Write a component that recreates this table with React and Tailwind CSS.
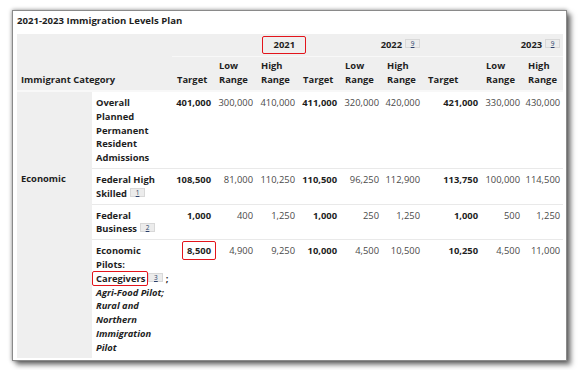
import React from 'react';

const years = [
  { year: '2021', note: null, boxed: true },
  { year: '2022', note: '9' },
  { year: '2023', note: '9' },
];

const rows = [
  {
    label: 'Overall Planned Permanent Resident Admissions',
    vals: ['401,000', '300,000', '410,000', '411,000', '320,000', '420,000', '421,000', '330,000', '430,000'],
  },
  {
    label: 'Federal High Skilled',
    note: '1',
    vals: ['108,500', '81,000', '110,250', '110,500', '96,250', '112,900', '113,750', '100,000', '114,500'],
  },
  {
    label: 'Federal Business',
    note: '2',
    vals: ['1,000', '400', '1,250', '1,000', '250', '1,250', '1,000', '500', '1,250'],
  },
  {
    pilots: true,
    vals: ['8,500', '4,900', '9,250', '10,000', '4,500', '10,500', '10,250', '4,500', '11,000'],
  },
];

const Note = ({ n }) => (
  <span className="inline-block align-top ml-[3px] mt-[1px] w-[15px] h-[9px] bg-[#ececec] border border-[#d8d8d8] text-center text-[6.5px] leading-[8px] font-normal text-[#2a3f6b] underline">
    {n}
  </span>
);

const RedBox = ({ className }) => (
  <span className={`absolute border-[1.5px] border-[#e3141b] rounded-[2px] pointer-events-none ${className}`} />
);

export default function App() {
  return (
    <div className="w-[580px] h-[370px] bg-white pl-[12px] pt-[10px] font-['Open_Sans',sans-serif] text-[9.4px] leading-[13.8px] text-[#1e1e1e]">
      <div className="w-[555px] h-[351px] bg-white border border-[#8a8a8a] shadow-[0_0_4px_rgba(0,0,0,0.45),4px_4px_5px_rgba(0,0,0,0.5)] pl-[4px] pt-[3px]">
        <div className="font-bold text-[9.6px] leading-[14px] mb-[6px]">2021-2023 Immigration Levels Plan</div>

        <table className="table-fixed border-collapse w-[546px]">
          <colgroup>
            <col className="w-[75px]" />
            <col className="w-[80px]" />
            <col className="w-[42px]" />
            <col className="w-[42px]" />
            <col className="w-[42px]" />
            <col className="w-[42px]" />
            <col className="w-[42px]" />
            <col className="w-[41px]" />
            <col className="w-[58px]" />
            <col className="w-[42px]" />
            <col className="w-[40px]" />
          </colgroup>
          <thead className="bg-[#efefef]">
            <tr className="h-[22px]">
              <th colSpan={2} rowSpan={2} className="align-bottom text-left font-bold pl-[4px] pb-[3px] border-b-2 border-[#f8f8f8]">
                Immigrant Category
              </th>
              {years.map((y) => (
                <th key={y.year} colSpan={3} className="text-right font-bold pr-[3px] border-b border-[#f8f8f8] align-middle">
                  <span className="relative">
                    {y.year}
                    {y.boxed && <RedBox className="-left-[12px] -right-[11px] -top-[2px] -bottom-[3px]" />}
                  </span>
                  {y.note && <Note n={y.note} />}
                </th>
              ))}
            </tr>
            <tr className="h-[35px]">
              {years.map((y) => (
                <React.Fragment key={y.year}>
                  <th className="align-bottom text-left font-bold pl-[5px] pb-[3px] border-b-2 border-[#f8f8f8]">Target</th>
                  <th className="align-bottom text-left font-bold pl-[5px] pb-[3px] border-b-2 border-[#f8f8f8]">Low Range</th>
                  <th className="align-bottom text-left font-bold pl-[5px] pb-[3px] border-b-2 border-[#f8f8f8]">High Range</th>
                </React.Fragment>
              ))}
            </tr>
          </thead>
          <tbody>
            {rows.map((r, i) => (
              <tr key={i}>
                {i === 0 && <td className="bg-[#efefef]" />}
                {i === 1 && (
                  <td rowSpan={3} className="bg-[#efefef] align-top font-bold pl-[4px] pt-[4px]">
                    Economic
                  </td>
                )}
                <td className={`align-top font-bold pl-[4px] pr-[3px] pt-[4px] pb-[3px] ${i > 0 ? 'border-t border-[#e9e9e9]' : ''}`}>
                  {r.pilots ? (
                    <>
                      Economic Pilots:{' '}
                      <span className="relative">
                        Caregivers
                        <RedBox className="-left-[4px] -right-[3px] -top-[1px] -bottom-[1px]" />
                      </span>
                      <Note n="3" /> ;{' '}
                      <i>Agri-Food Pilot; Rural and Northern Immigration Pilot</i>
                    </>
                  ) : (
                    <>
                      {r.label}
                      {r.note && <Note n={r.note} />}
                    </>
                  )}
                </td>
                {r.vals.map((v, j) => {
                  const bold = j % 3 === 0;
                  return (
                    <td
                      key={j}
                      className={`align-top text-right pr-[3px] pt-[4px] ${bold ? 'font-bold text-[#1e1e1e]' : 'text-[#4a4a4a]'} ${i > 0 ? 'border-t border-[#e9e9e9]' : ''}`}
                    >
                      {r.pilots && j === 0 ? (
                        <span className="relative">
                          {v}
                          <RedBox className="-left-[5px] -right-[5px] -top-[3px] -bottom-[3px]" />
                        </span>
                      ) : (
                        v
                      )}
                    </td>
                  );
                })}
              </tr>
            ))}
          </tbody>
        </table>
      </div>
    </div>
  );
}
